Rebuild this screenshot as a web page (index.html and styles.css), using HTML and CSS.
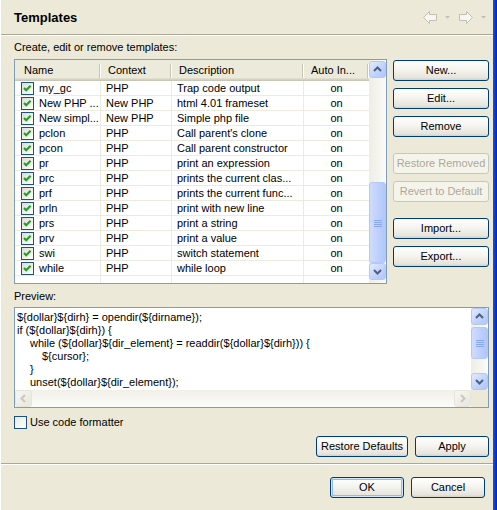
FILE: index.html
```html
<!DOCTYPE html>
<html>
<head>
<meta charset="utf-8">
<link rel="stylesheet" href="styles.css">
</head>
<body>
<div class="window">
  <div class="main">
    <div class="titlebar">
      <h1 class="title">Templates</h1>
      <svg class="nav" width="64" height="14" viewBox="0 0 64 14">
        <polygon points="0.5,6.5 6.5,0.5 6.5,3.5 13.5,3.5 13.5,9.5 6.5,9.5 6.5,12.5" fill="#f7f6f1" stroke="#c2bfb0"/>
        <polygon points="22,5 27,5 24.5,7.5" fill="#c2bfb0"/>
        <polygon points="49.5,6.5 43.5,0.5 43.5,3.5 36.5,3.5 36.5,9.5 43.5,9.5 43.5,12.5" fill="#f7f6f1" stroke="#c2bfb0"/>
        <polygon points="58,5 63,5 60.5,7.5" fill="#c2bfb0"/>
      </svg>
    </div>
    <div class="page">
      <div class="page-label">Create, edit or remove templates:</div>
      <div class="tablerow">
        <div class="list">
          <div class="cols">
            <div class="hdr">
              <div class="hc hc-name">Name</div>
              <div class="hc">Context</div>
              <div class="hc">Description</div>
              <div class="hc">Auto In...</div>
            </div>
            <div class="row"><div class="c c-name"><span class="cb"><svg viewBox="0 0 11 11" width="11" height="11"><path d="M2 5 L4.2 7.2 L8.6 2.8" /></svg></span>my_gc</div><div class="c c-ctx">PHP</div><div class="c c-desc">Trap code output</div><div class="c c-auto">on</div></div>
            <div class="row"><div class="c c-name"><span class="cb"><svg viewBox="0 0 11 11" width="11" height="11"><path d="M2 5 L4.2 7.2 L8.6 2.8" /></svg></span>New PHP ...</div><div class="c c-ctx">New PHP</div><div class="c c-desc">html 4.01 frameset</div><div class="c c-auto">on</div></div>
            <div class="row"><div class="c c-name"><span class="cb"><svg viewBox="0 0 11 11" width="11" height="11"><path d="M2 5 L4.2 7.2 L8.6 2.8" /></svg></span>New simpl...</div><div class="c c-ctx">New PHP</div><div class="c c-desc">Simple php file</div><div class="c c-auto">on</div></div>
            <div class="row"><div class="c c-name"><span class="cb"><svg viewBox="0 0 11 11" width="11" height="11"><path d="M2 5 L4.2 7.2 L8.6 2.8" /></svg></span>pclon</div><div class="c c-ctx">PHP</div><div class="c c-desc">Call parent's clone</div><div class="c c-auto">on</div></div>
            <div class="row"><div class="c c-name"><span class="cb"><svg viewBox="0 0 11 11" width="11" height="11"><path d="M2 5 L4.2 7.2 L8.6 2.8" /></svg></span>pcon</div><div class="c c-ctx">PHP</div><div class="c c-desc">Call parent constructor</div><div class="c c-auto">on</div></div>
            <div class="row"><div class="c c-name"><span class="cb"><svg viewBox="0 0 11 11" width="11" height="11"><path d="M2 5 L4.2 7.2 L8.6 2.8" /></svg></span>pr</div><div class="c c-ctx">PHP</div><div class="c c-desc">print an expression</div><div class="c c-auto">on</div></div>
            <div class="row"><div class="c c-name"><span class="cb"><svg viewBox="0 0 11 11" width="11" height="11"><path d="M2 5 L4.2 7.2 L8.6 2.8" /></svg></span>prc</div><div class="c c-ctx">PHP</div><div class="c c-desc">prints the current clas...</div><div class="c c-auto">on</div></div>
            <div class="row"><div class="c c-name"><span class="cb"><svg viewBox="0 0 11 11" width="11" height="11"><path d="M2 5 L4.2 7.2 L8.6 2.8" /></svg></span>prf</div><div class="c c-ctx">PHP</div><div class="c c-desc">prints the current func...</div><div class="c c-auto">on</div></div>
            <div class="row"><div class="c c-name"><span class="cb"><svg viewBox="0 0 11 11" width="11" height="11"><path d="M2 5 L4.2 7.2 L8.6 2.8" /></svg></span>prln</div><div class="c c-ctx">PHP</div><div class="c c-desc">print with new line</div><div class="c c-auto">on</div></div>
            <div class="row"><div class="c c-name"><span class="cb"><svg viewBox="0 0 11 11" width="11" height="11"><path d="M2 5 L4.2 7.2 L8.6 2.8" /></svg></span>prs</div><div class="c c-ctx">PHP</div><div class="c c-desc">print a string</div><div class="c c-auto">on</div></div>
            <div class="row"><div class="c c-name"><span class="cb"><svg viewBox="0 0 11 11" width="11" height="11"><path d="M2 5 L4.2 7.2 L8.6 2.8" /></svg></span>prv</div><div class="c c-ctx">PHP</div><div class="c c-desc">print a value</div><div class="c c-auto">on</div></div>
            <div class="row"><div class="c c-name"><span class="cb"><svg viewBox="0 0 11 11" width="11" height="11"><path d="M2 5 L4.2 7.2 L8.6 2.8" /></svg></span>swi</div><div class="c c-ctx">PHP</div><div class="c c-desc">switch statement</div><div class="c c-auto">on</div></div>
            <div class="row"><div class="c c-name"><span class="cb"><svg viewBox="0 0 11 11" width="11" height="11"><path d="M2 5 L4.2 7.2 L8.6 2.8" /></svg></span>while</div><div class="c c-ctx">PHP</div><div class="c c-desc">while loop</div><div class="c c-auto">on</div></div>
            <div class="row"><div class="c"></div><div class="c"></div><div class="c"></div><div class="c"></div></div>
          </div>
          <div class="vs">
            <div class="sb-btn"><svg viewBox="0 0 15 15" width="15" height="15"><path d="M4 9 L7.5 5.5 L11 9"/></svg></div>
            <div class="sb-fill"></div>
            <div class="thumb thumb-list"><svg viewBox="0 0 8 8" width="8" height="8"><path d="M0 1.5H8M0 3.5H8M0 5.5H8M0 7.5H8"/></svg></div>
            <div class="sb-btn"><svg viewBox="0 0 15 15" width="15" height="15"><path d="M4 6 L7.5 9.5 L11 6"/></svg></div>
          </div>
        </div>
        <div class="btncol">
          <button class="btn">New...</button>
          <button class="btn">Edit...</button>
          <button class="btn">Remove</button>
          <button class="btn sep" disabled>Restore Removed</button>
          <button class="btn" disabled>Revert to Default</button>
          <button class="btn sep">Import...</button>
          <button class="btn">Export...</button>
        </div>
      </div>
      <div class="page-label preview-label">Preview:</div>
      <div class="preview">
        <div class="pv-top">
          <div class="code">
            <div class="ln">${dollar}${dirh} = opendir(${dirname});</div>
            <div class="ln">if (${dollar}${dirh}) {</div>
            <div class="ln i1">while (${dollar}${dir_element} = readdir(${dollar}${dirh})) {</div>
            <div class="ln i2">${cursor};</div>
            <div class="ln i1">}</div>
            <div class="ln i1">unset(${dollar}${dir_element});</div>
            <div class="ln i1">closedir(${dollar}${dirh});</div>
          </div>
          <div class="vs pv-vs">
            <div class="sb-btn"><svg viewBox="0 0 15 15" width="15" height="15"><path d="M4 9 L7.5 5.5 L11 9"/></svg></div>
            <div class="thumb thumb-pv"><svg viewBox="0 0 8 8" width="8" height="8"><path d="M0 1.5H8M0 3.5H8M0 5.5H8M0 7.5H8"/></svg></div>
            <div class="sb-fill"></div>
            <div class="sb-btn"><svg viewBox="0 0 15 15" width="15" height="15"><path d="M4 6 L7.5 9.5 L11 6"/></svg></div>
          </div>
        </div>
        <div class="pv-bottom">
          <div class="hs">
            <div class="sb-btn off"><svg viewBox="0 0 15 15" width="15" height="15"><path d="M9 4 L5.5 7.5 L9 11"/></svg></div>
            <div class="sb-fill"></div>
            <div class="sb-btn off"><svg viewBox="0 0 15 15" width="15" height="15"><path d="M6 4 L9.5 7.5 L6 11"/></svg></div>
          </div>
          <div class="corner"></div>
        </div>
      </div>
      <label class="check-row"><span class="cb empty"></span><span class="check-text">Use code formatter</span></label>
      <div class="btnrow">
        <button class="btn w-restore">Restore Defaults</button>
        <button class="btn w-std">Apply</button>
      </div>
    </div>
    <div class="footer">
      <button class="btn w-std default">OK</button>
      <button class="btn w-std">Cancel</button>
    </div>
  </div>
  <div class="frame"></div>
</div>
</body>
</html>
```
FILE: styles.css
```css
* { box-sizing: border-box; }
html, body { margin: 0; padding: 0; }
body {
  background: #ece9d8;
  font-family: "Liberation Sans", Arial, sans-serif;
  font-size: 11px;
  color: #000;
  width: 497px;
  height: 510px;
  overflow: hidden;
}
.window { display: flex; height: 510px; }
.main {
  width: 493px;
  border-left: 1px solid #fff;
  display: flex;
  flex-direction: column;
}
.frame { width: 4px; background: linear-gradient(to right, #1a4fe6, #0a3ad8 50%, #0026b8); }

.titlebar {
  height: 35px;
  border-bottom: 1px solid #aca899;
  display: flex;
  align-items: center;
  justify-content: space-between;
  padding: 1px 6px 0 13px;
}
.title { margin: 0; font-size: 13px; font-weight: bold; }
.nav { display: block; }

.page {
  border-top: 1px solid #fff;
  border-bottom: 1px solid #aca899;
  padding: 0 4px 6px 13px;
  display: flex;
  flex-direction: column;
}
.page-label { height: 23px; padding-top: 4px; line-height: 14px; }
.preview-label { padding-top: 5px; }

.tablerow { display: flex; gap: 6px; height: 225px; }
.list {
  width: 373px;
  border: 1px solid #7f9db9;
  background: #fff;
  display: flex;
}
.cols { width: 354px; overflow: hidden; }
.hdr, .row {
  display: grid;
  grid-template-columns: 86px 71px 132px 65px;
}
.hdr {
  height: 21px;
  background: #ebeadb;
  box-shadow: inset 0 -1px #cbc7b8, inset 0 -2px #d6d2c2, inset 0 -3px #e2decd;
}
.hc {
  line-height: 21px;
  padding-left: 7px;
  white-space: nowrap;
  overflow: hidden;
  background:
    linear-gradient(#c7c5b2, #c7c5b2) right 1px top 4px / 1px 14px no-repeat,
    linear-gradient(#fff, #fff) right 0 top 4px / 1px 14px no-repeat;
}
.hc-name { padding-left: 9px; }
.row { height: 15px; border-bottom: 1px solid #edebe0; }
.c {
  border-right: 1px solid #edebe0;
  line-height: 15px;
  white-space: nowrap;
  overflow: hidden;
}
.c:last-child { border-right: none; }
.c-name { display: flex; align-items: center; gap: 5px; padding-left: 6px; }
.c-ctx, .c-desc { padding-left: 5px; }
.c-auto { text-align: center; }

.cb {
  flex: none;
  width: 13px;
  height: 13px;
  border: 1px solid #1c5180;
  background: linear-gradient(135deg, #dcdcd7, #fff);
  display: block;
}
.cb svg { display: block; }
.cb path { fill: none; stroke: #21a121; stroke-width: 2.2; }
.cb.empty { background: linear-gradient(135deg, #e8e8e2, #fff); }

.vs {
  width: 17px;
  display: flex;
  flex-direction: column;
  padding: 1px 0 3px;
  background: linear-gradient(to right, #eeede5, #fbfbf8);
}
.sb-btn {
  height: 17px;
  flex: none;
  border: 1px solid #b4c8f6;
  border-radius: 3px;
  background: linear-gradient(135deg, #e2eafe, #bfd2fb 60%, #b0c6f7);
  display: flex;
  align-items: center;
  justify-content: center;
}
.sb-btn path { fill: none; stroke: #4d6185; stroke-width: 2; }
.sb-btn.off { border-color: #e6e5dc; background: linear-gradient(135deg, #f7f6f1, #e8e7de); }
.sb-btn.off path { stroke: #cac8bb; }
.sb-fill { flex: 1; }
.thumb {
  flex: none;
  border: 1px solid #b4c8f6;
  border-radius: 3px;
  background: linear-gradient(to right, #cfdcfd, #bccffb 60%, #b2c7f8);
  display: flex;
  align-items: center;
  justify-content: center;
}
.thumb path { stroke: #8aa6ee; stroke-width: 1; }
.thumb-list { height: 81px; }
.thumb-pv { height: 32px; margin-top: 2px; }

.btncol { width: 96px; display: flex; flex-direction: column; gap: 7px; padding-top: 1px; }
.btn {
  height: 21px;
  padding: 0;
  border: 1px solid #003c74;
  border-radius: 3px;
  background: linear-gradient(#ffffff, #f5f4ef 45%, #e6e4dc 88%, #d6d0c5);
  font-family: "Liberation Sans", Arial, sans-serif;
  font-size: 11px;
  color: #000;
  line-height: 19px;
  text-align: center;
}
.btn:disabled {
  border-color: #c9c7ba;
  background: #f5f4ea;
  color: #aca899;
}
.btn.sep { margin-top: 9px; }
.btn.default { box-shadow: inset 0 0 0 1px #cee7ff, inset 0 0 0 2px #98b8ea; }

.preview {
  height: 101px;
  border: 1px solid #7f9db9;
  background: #fff;
  display: flex;
  flex-direction: column;
}
.pv-top { display: flex; height: 82px; }
.code {
  flex: 1;
  overflow: hidden;
  padding: 3px 0 0 2px;
}
.ln { line-height: 13px; height: 13px; white-space: pre; }
.i1 { padding-left: 13px; }
.i2 { padding-left: 25px; }
.pv-vs { padding: 0; }
.pv-bottom { display: flex; height: 17px; }
.hs {
  flex: 1;
  display: flex;
  background: linear-gradient(#f0efe8, #fcfcfa);
}
.hs .sb-btn { width: 17px; }
.corner { width: 17px; background: #ece9d8; }

.check-row {
  margin-top: 8px;
  height: 13px;
  display: flex;
  align-items: center;
  gap: 3px;
}
.check-text { line-height: 13px; white-space: nowrap; }
.btnrow { margin-top: 7px; display: flex; justify-content: flex-end; gap: 7px; }
.w-restore { width: 92px; }
.w-std { width: 74px; }

.footer {
  border-top: 1px solid #fff;
  display: flex;
  justify-content: flex-end;
  gap: 7px;
  padding: 12px 8px 0 0;
}
```
